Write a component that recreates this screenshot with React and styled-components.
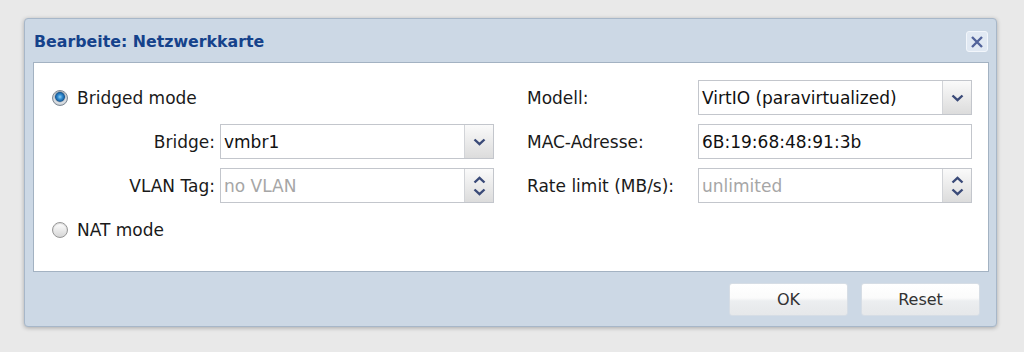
import styled, { createGlobalStyle } from "styled-components";

const GlobalStyle = createGlobalStyle`
  body {
    margin: 0;
    background: #e9e9e9;
    font-family: "DejaVu Sans", Verdana, sans-serif;
  }
`;

const Page = styled.div`
  padding: 18px 0 0 24px;
  height: 352px;
  box-sizing: border-box;
`;

const Window = styled.div`
  width: 973px;
  height: 309px;
  box-sizing: border-box;
  background: #ccd8e5;
  border: 1px solid #a7b7c9;
  border-radius: 4px;
  box-shadow: 0 1px 4px rgba(0, 0, 0, 0.28);
  display: flex;
  flex-direction: column;
`;

const Header = styled.div`
  height: 43px;
  display: flex;
  align-items: center;
  justify-content: space-between;
  padding: 2px 8px 0 9px;
  box-sizing: border-box;
`;

const Title = styled.h4`
  margin: 0;
  font-size: 15.8px;
  font-weight: 700;
  color: #15428b;
`;

const Close = styled.button`
  width: 22px;
  height: 21px;
  padding: 0;
  border: 1px solid #f2f6fb;
  border-radius: 3px;
  background: #e1e9f3;
  display: flex;
  align-items: center;
  justify-content: center;
`;

const Panel = styled.div`
  margin: 0 7px 0 8px;
  height: 210px;
  box-sizing: border-box;
  background: #fff;
  border: 1px solid #a3b2c2;
  display: flex;
  justify-content: space-between;
  padding: 17px 16px 0 18px;
`;

const Column = styled.div`
  width: ${(p) => p.$width}px;
  display: flex;
  flex-direction: column;
  gap: 9px;
`;

const Row = styled.div`
  height: 35px;
  display: flex;
  align-items: center;
  font-size: 17px;
  color: #1a1a1a;
`;

const RadioLabel = styled.label`
  display: flex;
  align-items: center;
  gap: 9px;
`;

const Radio = styled.span`
  width: 16px;
  height: 16px;
  box-sizing: border-box;
  border-radius: 50%;
  border: 1px solid ${(p) => (p.$checked ? "#7d8894" : "#979797")};
  background: ${(p) =>
    p.$checked
      ? "radial-gradient(circle at 50% 42%, #8fd0f5 0, #2f8ad0 2.5px, #1a5c98 4.5px, #aab4be 5.2px, #dfe3e7 6px, #c5cbd1 8px)"
      : "linear-gradient(#ffffff, #d6d6d6)"};
  box-shadow: inset 0 1px 1px rgba(0, 0, 0, 0.15);
`;

const Label = styled.span`
  width: ${(p) => p.$width}px;
  flex: none;
  text-align: ${(p) => (p.$right ? "right" : "left")};
  padding-right: ${(p) => (p.$right ? "5px" : "0")};
  box-sizing: border-box;
`;

const Field = styled.div`
  width: 274px;
  height: 35px;
  box-sizing: border-box;
  border: 1px solid #c3c6cc;
  background: #fff;
  display: flex;
`;

const Value = styled.span`
  flex: 1;
  padding-left: 3px;
  display: flex;
  align-items: center;
  color: ${(p) => (p.$empty ? "#a6a6a6" : "#111")};
`;

const Trigger = styled.div`
  width: 28px;
  flex: none;
  border-left: 1px solid #d2d4d8;
  background: linear-gradient(#fafafa, #dcdcdc);
  display: flex;
  flex-direction: column;
  align-items: center;
  justify-content: center;
  gap: 4px;
`;

const Footer = styled.div`
  flex: 1;
  display: flex;
  justify-content: flex-end;
  align-items: center;
  gap: 13px;
  padding-right: 16px;
`;

const Button = styled.button`
  width: 119px;
  height: 33px;
  border: 1px solid #d6dde5;
  border-radius: 3px;
  background: linear-gradient(#ffffff 0, #fbfbfb 45%, #eceef0 55%, #e6e8ea 100%);
  font-family: "DejaVu Sans", Verdana, sans-serif;
  font-size: 16px;
  color: #333;
`;

const Chevron = ({ up }) => (
  <svg width="13" height="8" viewBox="0 0 13 8">
    <path
      d={up ? "M1.5 6.5 L6.5 1.8 L11.5 6.5" : "M1.5 1.5 L6.5 6.2 L11.5 1.5"}
      fill="none"
      stroke="#3a4a78"
      strokeWidth="2.4"
    />
  </svg>
);

const Select = ({ value }) => (
  <Field>
    <Value>{value}</Value>
    <Trigger>
      <Chevron />
    </Trigger>
  </Field>
);

const Spinner = ({ placeholder }) => (
  <Field>
    <Value $empty>{placeholder}</Value>
    <Trigger>
      <Chevron up />
      <Chevron />
    </Trigger>
  </Field>
);

const Text = ({ value }) => (
  <Field>
    <Value>{value}</Value>
  </Field>
);

const App = () => {
  return (
    <Page>
      <GlobalStyle />
      <Window>
        <Header>
          <Title>Bearbeite: Netzwerkkarte</Title>
          <Close>
            <svg width="14" height="14" viewBox="0 0 14 14">
              <path d="M2 2 L12 12 M12 2 L2 12" stroke="#52639a" strokeWidth="2.4" />
            </svg>
          </Close>
        </Header>
        <Panel>
          <Column $width={442}>
            <Row>
              <RadioLabel>
                <Radio $checked />
                Bridged mode
              </RadioLabel>
            </Row>
            <Row>
              <Label $width={168} $right>Bridge:</Label>
              <Select value="vmbr1" />
            </Row>
            <Row>
              <Label $width={168} $right>VLAN Tag:</Label>
              <Spinner placeholder="no VLAN" />
            </Row>
            <Row>
              <RadioLabel>
                <Radio />
                NAT mode
              </RadioLabel>
            </Row>
          </Column>
          <Column $width={445}>
            <Row>
              <Label $width={171}>Modell:</Label>
              <Select value="VirtIO (paravirtualized)" />
            </Row>
            <Row>
              <Label $width={171}>MAC-Adresse:</Label>
              <Text value="6B:19:68:48:91:3b" />
            </Row>
            <Row>
              <Label $width={171}>Rate limit (MB/s):</Label>
              <Spinner placeholder="unlimited" />
            </Row>
          </Column>
        </Panel>
        <Footer>
          <Button>OK</Button>
          <Button>Reset</Button>
        </Footer>
      </Window>
    </Page>
  );
};

export default App;
